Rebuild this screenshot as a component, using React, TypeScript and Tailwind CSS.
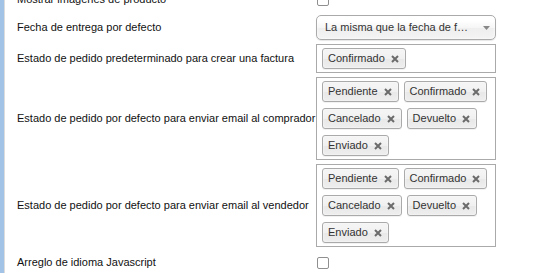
import React from "react";

const X = () => (
  <svg width="8" height="8" viewBox="0 0 8 8" className="absolute right-[6px] top-[6px]">
    <path d="M1 1 L7 7 M7 1 L1 7" stroke="#6b6b6b" strokeWidth="2" strokeLinecap="butt" />
  </svg>
);

const Tag = ({ label }: { label: string }) => (
  <li className="relative my-[3px] h-[21px] pl-[5px] pr-[20px] flex items-center rounded-[3px] border border-[#aaaaaa] bg-[linear-gradient(#f4f4f4_20%,#f0f0f0_50%,#e8e8e8_52%,#eeeeee_100%)] shadow-[0_0_2px_white_inset,0_1px_0_rgba(0,0,0,0.05)] text-[11px] text-[#333] leading-[13px]">
    {label}
    <X />
  </li>
);

const TagBox = ({ tags }: { tags: string[] }) => (
  <ul className="w-[180px] border border-[#aaaaaa] bg-white px-[5px] flex flex-wrap gap-x-[5px] list-none m-0">
    {tags.map((t) => (
      <Tag key={t} label={t} />
    ))}
  </ul>
);

const Checkbox = () => (
  <div className="w-[12px] h-[12px] rounded-[2px] border border-[#8f8f8f] bg-white ml-[1px]" />
);

const Row = ({ label, children, className }: { label: string; children: React.ReactNode; className?: string }) => (
  <div className={"flex items-center shrink-0 " + (className ?? "")}>
    <div className="w-[299px] shrink-0 text-[11px] text-[#111] whitespace-nowrap">{label}</div>
    <div>{children}</div>
  </div>
);

const all = ["Pendiente", "Confirmado", "Cancelado", "Devuelto", "Enviado"];

export default function App() {
  return (
    <div className="w-[537px] h-[273px] overflow-hidden bg-white flex font-[Liberation_Sans,Arial,sans-serif]">
      <div className="w-[4px] shrink-0 bg-[#a3c3e6]" />
      <div className="w-[1px] shrink-0 bg-[#dcdcdc]" />
      <div className="flex-1 pl-[12px] flex flex-col gap-[4px] mt-[-12px]">
        <Row label="Mostrar imágenes de producto" className="h-[23px]">
          <Checkbox />
        </Row>
        <Row label="Fecha de entrega por defecto">
          <div className="w-[180px] h-[25px] rounded-[5px] border border-[#aaaaaa] bg-[linear-gradient(#ffffff_20%,#f6f6f6_50%,#eeeeee_52%,#f4f4f4_100%)] shadow-[0_0_3px_white_inset,0_1px_1px_rgba(0,0,0,0.1)] flex items-center pl-[8px] pr-[5px] text-[11px] text-[#333]">
            <span className="flex-1 whitespace-nowrap">La misma que la fecha de f…</span>
            <svg width="7" height="4" viewBox="0 0 7 4">
              <path d="M0 0 L7 0 L3.5 4 Z" fill="#888" />
            </svg>
          </div>
        </Row>
        <Row label="Estado de pedido predeterminado para crear una factura">
          <TagBox tags={["Confirmado"]} />
        </Row>
        <Row label="Estado de pedido por defecto para enviar email al comprador">
          <TagBox tags={all} />
        </Row>
        <Row label="Estado de pedido por defecto para enviar email al vendedor">
          <TagBox tags={all} />
        </Row>
        <Row label="Arreglo de idioma Javascript" className="h-[23px]">
          <Checkbox />
        </Row>
      </div>
    </div>
  );
}
